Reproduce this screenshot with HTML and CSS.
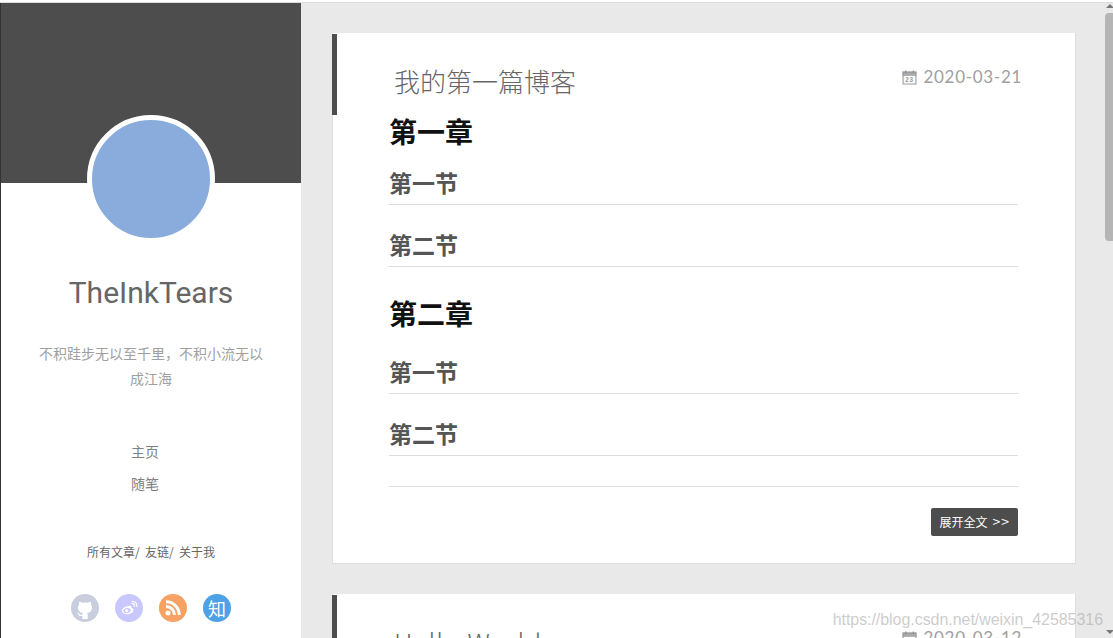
FILE: index.html
```html
<!DOCTYPE html>
<html lang="zh">
<head>
<meta charset="utf-8">
<title>TheInkTears</title>
<link rel="stylesheet" href="styles.css">
</head>
<body>
<div class="page">
  <aside class="sidebar">
    <div class="banner"></div>
    <div class="avatar"></div>
    <div class="name">TheInkTears</div>
    <p class="motto">不积跬步无以至千里，不积小流无以成江海</p>
    <nav class="nav"><a>主页</a><a>随笔</a></nav>
    <div class="links">所有文章/&nbsp; 友链/&nbsp; 关于我</div>
    <div class="social">
      <span class="soc soc-gh"><svg viewBox="0 0 16 16" width="22" height="22"><path fill="#fff" d="M6.020 15.210v-1.400c-2.010.37-2.530-.49-2.690-.94-.09-.23-.48-.94-.82-1.130-.28-.15-.68-.52-.01-.53.63-.01 1.080.58 1.230.82.720 1.210 1.870.87 2.330.66.070-.52.280-.87.510-1.070-1.780-.2-3.640-.89-3.640-3.950 0-.87.310-1.590.820-2.150-.08-.2-.36-1.020.080-2.120 0 0 .67-.21 2.200.82.640-.18 1.320-.27 2-.27s1.360.09 2 .27c1.530-1.040 2.200-.82 2.200-.82.440 1.100.160 1.920.080 2.120.510.560.820 1.270.820 2.150 0 3.070-1.870 3.750-3.650 3.950.290.250.540.730.540 1.480v3.200H6.020z"/></svg></span>
      <span class="soc soc-wb"><svg viewBox="0 0 20 20" width="20" height="20"><path fill="#fff" fill-rule="evenodd" d="M8.600 8.200c-3 .3-5.600 2.300-5.600 4.600 0 2 2.200 3.400 5 3.400 3.500 0 6.500-1.900 6.500-4.300 0-1.300-1.200-1.700-1.800-1.900-.3-.1-.5-.2-.4-.5.400-1-.1-1.700-1-1.800-.8-.1-2 .4-2.700.5zM8 15c-2.200.2-3.800-.8-3.800-2.100 0-1.400 1.700-2.700 3.800-2.900 2.200-.2 3.800.8 3.800 2.200S10.200 14.800 8 15z"/><circle cx="7.700" cy="12.600" r="1.600" fill="#fff"/><path fill="none" stroke="#fff" stroke-width="1.300" d="M12.500 5.500c1.800-.4 3.500 1.200 3 3.200M12.800 3.400c3.300-.5 5.700 2.300 4.900 5.500"/></svg></span>
      <span class="soc soc-rss"><svg viewBox="0 0 20 20" width="20" height="20"><circle cx="5" cy="15" r="2.500" fill="#fff"/><path fill="none" stroke="#fff" stroke-width="3" d="M3 8.500c4.800 0 8.500 3.700 8.500 8.500M3 3.800c7.500 0 13.200 5.700 13.200 13.200"/></svg></span>
      <span class="soc soc-zh">知</span>
    </div>
  </aside>
  <main class="main">
    <article class="card">
      <div class="card-head">
        <h2 class="title">我的第一篇博客</h2>
        <div class="date"><svg class="cal" viewBox="0.5 0.500 14 14" width="15" height="15"><path fill="#aaa" d="M1 2h13v4H1z"/><path fill="none" stroke="#999" d="M1.500 2.500h12v11h-12z"/><path stroke="#888" d="M4 1v2M11 1v2"/><text x="7.500" y="12" text-anchor="middle" class="cal-num">23</text></svg>2020-03-21</div>
      </div>
      <div class="body">
        <h1 class="h-one">第一章</h1>
        <h2 class="h-two">第一节</h2>
        <h2 class="h-two">第二节</h2>
        <h1 class="h-one h-later">第二章</h1>
        <h2 class="h-two">第一节</h2>
        <h2 class="h-two">第二节</h2>
        <hr class="rule">
        <div class="more-row"><a class="more">展开全文<span class="arrows">&gt;&gt;</span></a></div>
      </div>
    </article>
    <article class="card">
      <div class="card-head">
        <h2 class="title title-latin">Hello World</h2>
        <div class="date"><svg class="cal" viewBox="0.5 0.500 14 14" width="15" height="15"><path fill="#aaa" d="M1 2h13v4H1z"/><path fill="none" stroke="#999" d="M1.500 2.500h12v11h-12z"/><path stroke="#888" d="M4 1v2M11 1v2"/><text x="7.500" y="12" text-anchor="middle" class="cal-num">23</text></svg>2020-03-12</div>
      </div>
    </article>
  </main>
  <div class="scrollbar">
    <span class="arrow-up"></span>
    <span class="thumb"></span>
    <span class="arrow-down"></span>
  </div>
  <div class="watermark">https://blog.csdn.net/weixin_42585316</div>
</div>
</body>
</html>
```
FILE: styles.css
```css
html, body { margin: 0; padding: 0; height: 100%; overflow: hidden; background: #fff; }
body { font-family: "Noto Sans CJK SC", "Liberation Sans", sans-serif; }
.page { position: relative; display: flex; height: 635px; margin-top: 2px; border-top: 1px solid #ddd; overflow: hidden; background: #e9e9e9; }

.sidebar { flex: 0 0 300px; border-left: 1px solid #333; background: #fff; display: flex; flex-direction: column; align-items: center; }
.banner { align-self: stretch; height: 180px; flex: none; background: #4d4d4d; }
.avatar { flex: none; width: 118px; height: 118px; margin-top: -68px; border: 5px solid #fff; border-radius: 50%; background: #8aacdc; }
.name { margin-top: 30px; font: 30px/40px Roboto, sans-serif; color: #666; }
.motto { width: 228px; margin: 28px 0 0; font-size: 14px; line-height: 25px; color: #a0a0a0; text-align: center; }
.nav { margin: 50px 12px 0 0; display: flex; flex-direction: column; align-items: center; gap: 12px; font-size: 14px; line-height: 20px; color: #808080; }
.links { margin-top: 50px; font-size: 12px; line-height: 18px; color: #666; }
.social { margin-top: 33px; display: flex; gap: 16px; }
.soc { width: 28px; height: 28px; border-radius: 50%; display: flex; align-items: center; justify-content: center; overflow: hidden; flex: none; }
.soc svg { flex: none; }
.soc-gh { background: #c8cede; }
.soc-wb { background: #c8c8ff; }
.soc-rss { background: #f6a264; }
.soc-zh { background: #4ea1e4; color: #fff; font-size: 18px; font-weight: 400; line-height: 28px; }

.main { flex: 1; min-width: 0; padding: 30px 30px 0 31px; display: flex; flex-direction: column; gap: 30px; }
.card { flex: none; box-sizing: border-box; width: 744px; background: #fff; border: 1px solid #ddd; border-width: 0 1px 1px 1px; padding-top: 1px; position: relative; }
.card::before { content: ""; position: absolute; left: -1px; top: 1px; width: 5px; height: 81px; background: #4d4d4d; }
.card-head { display: flex; justify-content: space-between; align-items: flex-start; padding: 29px 53px 0 61px; height: 50px; box-sizing: content-box; }
.title { margin: 0; font-size: 26px; line-height: 36px; font-weight: 300; color: #666; }
.title-latin { letter-spacing: 1px; }
.date { display: flex; align-items: center; gap: 7px; margin-top: 3px; font: 17px/22px Lato, sans-serif; letter-spacing: 0.7px; color: #a0a0a0; }
.cal { flex: none; margin-right: -1px; }
.cal-num { font: bold 6px "Liberation Sans", sans-serif; fill: #999; }
.body { padding: 0 57px 27px 56px; }
.h-one { margin: 0; padding-top: 1px; font-size: 28px; line-height: 34px; font-weight: 700; color: #111; }
.h-two { height: 44px; box-sizing: border-box; padding-top: 6px; border-bottom: 1px solid #ddd; font-size: 23px; line-height: 30px; font-weight: 700; color: #555; }
.h-one + .h-two { margin: 13px 0 0; }
.h-two + .h-two { margin: 18px 0 0; }
.h-later { margin-top: 28px; }
.h-later + .h-two { margin-top: 20px; }
.rule { margin: 30px 0 0; border: 0; border-top: 1px solid #ddd; }
.more-row { display: flex; justify-content: flex-end; margin-top: 21px; }
.more { display: block; height: 28px; background: #4d4d4d; color: #fff; font-size: 12px; line-height: 27px; padding: 0 8px; border-radius: 2px; }
.arrows { margin-left: 5px; font-size: 14px; line-height: 1; letter-spacing: 1px; }

.scrollbar { position: absolute; right: 0; top: -3px; bottom: 0; width: 8px; background: #e9e9e9; }
.thumb { position: absolute; top: 13px; left: 0; width: 8px; height: 228px; background: #b5b5b5; border-radius: 4px 0 0 4px; }
.arrow-up { position: absolute; top: 4px; left: 1px; border: 4px solid transparent; border-top: 0; border-bottom: 4px solid #777; }
.arrow-down { position: absolute; bottom: 4px; left: 1px; border: 4px solid transparent; border-bottom: 0; border-top: 4px solid #777; }
.watermark { position: absolute; right: 10px; top: 607px; font: 16px/20px "Liberation Sans", sans-serif; letter-spacing: -0.05px; color: rgba(170,170,170,0.6); }
```
